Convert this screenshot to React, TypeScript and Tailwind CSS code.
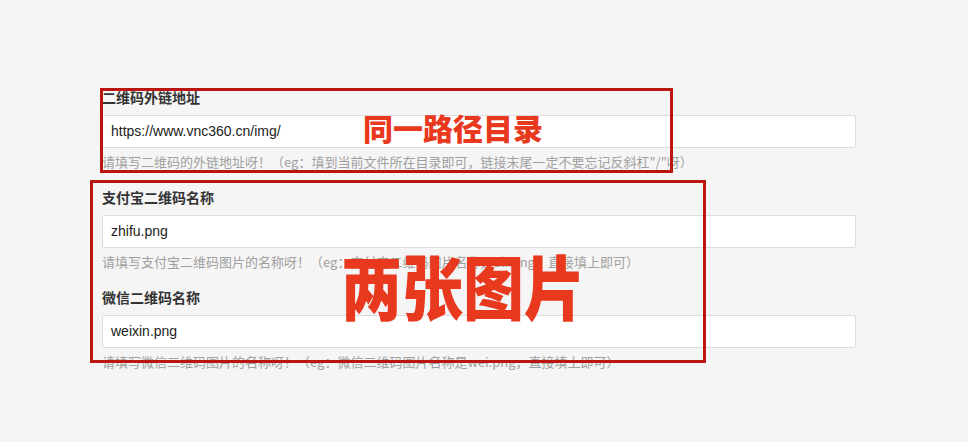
import React from "react";

const cjk = '"Noto Sans CJK SC", "Liberation Sans", sans-serif';
const latin = '"Liberation Sans", "Noto Sans CJK SC", sans-serif';

function Field({ label, value, hint }: { label: string; value: string; hint: string }) {
  return (
    <div className="flex flex-col">
      <div className="h-[20px] text-[14px] leading-[20px] font-bold text-[#333] mb-[8px]" style={{ fontFamily: cjk }}>
        {label}
      </div>
      <div
        className="h-[33px] w-[754px] bg-white border border-[#dcdcdc] rounded-[2px] px-[8px] flex items-center text-[14px] text-[#222]"
        style={{ fontFamily: latin }}
      >
        {value}
      </div>
      <div className="mt-[4px] h-[20px] text-[13px] leading-[20px] text-[#a0a0a0] whitespace-nowrap" style={{ fontFamily: cjk }}>
        {hint}
      </div>
    </div>
  );
}

export default function App() {
  return (
    <div className="relative w-[968px] h-[442px] bg-[#f5f5f5] overflow-hidden">
      <div className="pl-[102px] pt-[87px] flex flex-col gap-[15px]">
        <Field
          label="二维码外链地址"
          value="https://www.vnc360.cn/img/"
          hint={'请填写二维码的外链地址呀！（eg：填到当前文件所在目录即可，链接末尾一定不要忘记反斜杠"/"呀）'}
        />
        <Field
          label="支付宝二维码名称"
          value="zhifu.png"
          hint="请填写支付宝二维码图片的名称呀！（eg：支付宝二维码图片名称是ali.png，直接填上即可）"
        />
        <Field
          label="微信二维码名称"
          value="weixin.png"
          hint="请填写微信二维码图片的名称呀！（eg：微信二维码图片名称是wei.png，直接填上即可）"
        />
      </div>

      {/* annotation boxes */}
      <div className="absolute left-[100px] top-[88px] w-[573px] h-[85px] border-[3px] border-[#b8160e]" />
      <div className="absolute left-[90px] top-[180px] w-[616px] h-[183px] border-[3px] border-[#b8160e]" />

      {/* annotation texts */}
      <div
        className="absolute left-[363px] top-[112px] text-[30px] leading-none font-black text-[#e8391e] whitespace-nowrap"
        style={{ fontFamily: cjk }}
      >
        同一路径目录
      </div>
      <div
        className="absolute left-[341px] top-[249px] text-[61px] leading-none font-black text-[#e8391e] whitespace-nowrap origin-top scale-y-[1.15]"
        style={{ fontFamily: cjk }}
      >
        两张图片
      </div>
    </div>
  );
}
